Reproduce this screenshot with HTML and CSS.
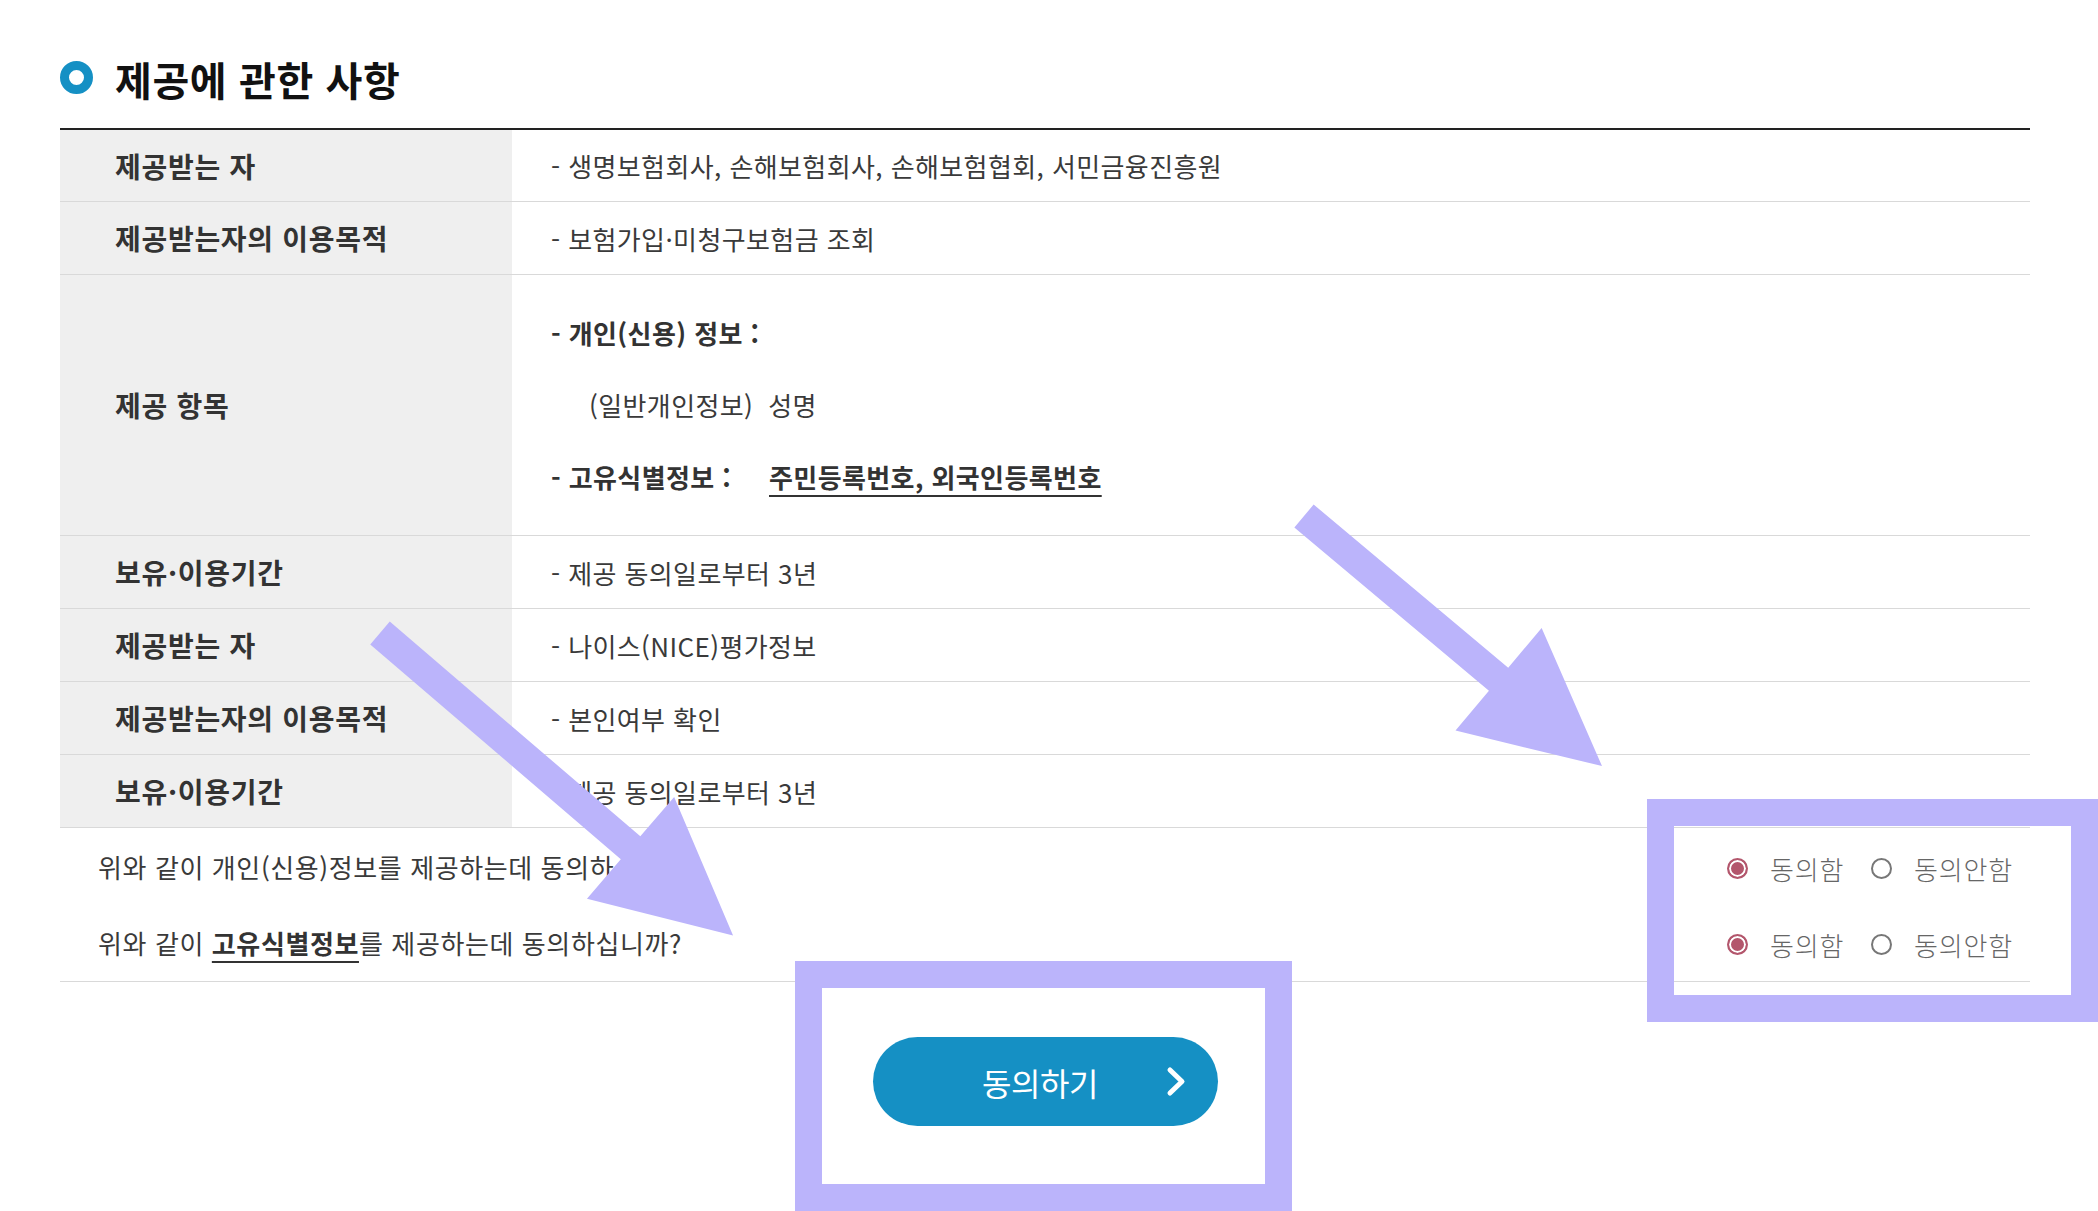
FILE: index.html
```html
<!DOCTYPE html>
<html lang="ko">
<head>
    <meta charset="UTF-8">
    <meta name="viewport" content="width=device-width, initial-scale=1.0">
    <title>개인(신용)정보 제공 동의</title>
    <link rel="stylesheet" href="styles.css">
</head>
<body>
    <div class="page">
        <h2 class="sec-title"><span class="bullet"></span>제공에 관한 사항</h2>

        <div class="info-table">
            <div class="row row-first">
                <div class="th">제공받는 자</div>
                <div class="td">- 생명보험회사, 손해보험회사, 손해보험협회, 서민금융진흥원</div>
            </div>
            <div class="row">
                <div class="th">제공받는자의 이용목적</div>
                <div class="td">- 보험가입·미청구보험금 조회</div>
            </div>
            <div class="row row-items">
                <div class="th">제공 항목</div>
                <div class="td">
                    <ul class="items">
                        <li class="strong">- 개인(신용) 정보 :</li>
                        <li class="sub">(일반개인정보)<span class="val">성명</span></li>
                        <li class="strong"><span class="lbl">- 고유식별정보 :</span><u>주민등록번호, 외국인등록번호</u></li>
                    </ul>
                </div>
            </div>
            <div class="row">
                <div class="th">보유·이용기간</div>
                <div class="td">- 제공 동의일로부터 3년</div>
            </div>
            <div class="row">
                <div class="th">제공받는 자</div>
                <div class="td">- 나이스(NICE)평가정보</div>
            </div>
            <div class="row">
                <div class="th">제공받는자의 이용목적</div>
                <div class="td">- 본인여부 확인</div>
            </div>
            <div class="row">
                <div class="th">보유·이용기간</div>
                <div class="td">- 제공 동의일로부터 3년</div>
            </div>
        </div>

        <div class="agree-box">
            <div class="agree-row">
                <p>위와 같이 개인(신용)정보를 제공하는데 동의하십니까?</p>
                <div class="choice">
                    <label><input type="radio" name="agree1" checked>동의함</label>
                    <label><input type="radio" name="agree1">동의안함</label>
                </div>
            </div>
            <div class="agree-row">
                <p>위와 같이 <u class="em">고유식별정보</u>를 제공하는데 동의하십니까?</p>
                <div class="choice">
                    <label><input type="radio" name="agree2" checked>동의함</label>
                    <label><input type="radio" name="agree2">동의안함</label>
                </div>
            </div>
        </div>

        <div class="btn-wrap">
            <button type="button" class="btn-agree">동의하기
                <svg class="chev" width="20" height="31" viewBox="0 0 20 31"><polyline points="4,4 16,15.5 4,27" fill="none" stroke="#fff" stroke-width="5" stroke-linecap="round" stroke-linejoin="round"/></svg>
            </button>
        </div>

        <!-- annotation marks -->
        <div class="mark mark-btn"></div>
        <div class="mark mark-radio"></div>
        <svg class="arrows" width="2098" height="1211" viewBox="0 0 2098 1211">
            <polygon transform="translate(380,633) rotate(40.6)" points="0,-15 330,-15 330,-67 465,0 330,67 330,15 0,15"/>
            <polygon transform="translate(1304,516) rotate(40)" points="0,-15 254,-15 254,-67 389,0 254,67 254,15 0,15"/>
        </svg>
    </div>
</body>
</html>
```

FILE: styles.css
```css
html, body {
    margin: 0;
    padding: 0;
    background: #fff;
    overflow: hidden;
}
body {
    font-family: "Noto Sans CJK KR", "Noto Sans", sans-serif;
    color: #333;
}
.page {
    position: relative;
    width: 2098px;
    height: 1211px;
    padding: 0 68px 0 60px;
    box-sizing: border-box;
}
.sec-title {
    display: flex;
    align-items: center;
    margin: 0 0 25px;
    padding-top: 55px;
    height: 48px;
    line-height: 48px;
    font-size: 40px;
    font-weight: 700;
    letter-spacing: 0.6px;
    color: #111;
}
.bullet {
    width: 33px;
    height: 33px;
    box-sizing: border-box;
    border: 9px solid #1590c4;
    border-radius: 50%;
    margin: -4px 22px 0 0;
}
.info-table {
    border-top: 2px solid #222;
}
.row {
    display: flex;
    height: 73px;
    box-sizing: border-box;
    border-bottom: 1px solid #d9d9d9;
}
.row-first {
    height: 72px;
}
.row-items {
    height: 261px;
}
.th {
    width: 452px;
    flex: none;
    box-sizing: border-box;
    padding-left: 55px;
    background: #efefef;
    display: flex;
    align-items: center;
    font-size: 28px;
    font-weight: 700;
    letter-spacing: 0.7px;
    color: #333;
}
.td {
    flex: 1;
    padding-left: 39px;
    display: flex;
    align-items: center;
    font-size: 26px;
    letter-spacing: 0.4px;
    color: #3a3a3a;
}
.items {
    list-style: none;
    margin: 0;
    padding: 0;
}
.items li {
    line-height: 72px;
}
.items .strong {
    font-weight: 700;
    color: #333;
}
.items .sub {
    padding-left: 38px;
}
.items .val {
    margin-left: 15px;
}
.items .lbl {
    display: inline-block;
    width: 218px;
}
.items u,
.agree-row u.em {
    text-decoration-thickness: 2px;
    text-underline-offset: 7px;
}
.agree-box {
    border-bottom: 1px solid #d9d9d9;
    padding-bottom: 1px;
}
.agree-row {
    display: flex;
    justify-content: space-between;
    align-items: center;
    height: 76px;
    padding: 0 17px 0 38px;
}
.agree-row p {
    margin: 0;
    font-size: 26px;
    letter-spacing: 0.6px;
    color: #3a3a3a;
}
.agree-row u.em {
    font-weight: 700;
    color: #333;
}
.choice {
    display: flex;
    gap: 27px;
    padding-top: 4px;
}
.choice label {
    display: flex;
    align-items: center;
    font-size: 26px;
    font-weight: 300;
    letter-spacing: 0.8px;
    color: #666;
}
.choice input {
    appearance: none;
    -webkit-appearance: none;
    width: 21px;
    height: 21px;
    margin: 0 22px 0 0;
    box-sizing: border-box;
    border: 2px solid #777;
    border-radius: 50%;
    background: #fff;
}
.choice input:checked {
    border: 2px solid #b3566c;
    background: #b3566c;
    box-shadow: inset 0 0 0 2px #fff;
}
.btn-wrap {
    display: flex;
    justify-content: center;
    padding-top: 55px;
}
.btn-agree {
    position: relative;
    width: 345px;
    height: 89px;
    border: 0;
    border-radius: 45px;
    background: #1590c4;
    color: #fff;
    font-family: inherit;
    font-size: 32px;
    letter-spacing: -0.5px;
    padding: 0 10px 0 0;
    cursor: pointer;
}
.chev {
    position: absolute;
    right: 32px;
    top: 29px;
}
.mark {
    position: absolute;
    box-sizing: border-box;
    border: 27px solid #bbb4fb;
}
.mark-btn {
    left: 795px;
    top: 961px;
    width: 497px;
    height: 250px;
}
.mark-radio {
    left: 1647px;
    top: 799px;
    width: 451px;
    height: 223px;
}
.arrows {
    position: absolute;
    left: 0;
    top: 0;
    pointer-events: none;
}
.arrows polygon {
    fill: #bbb4fb;
}
```
